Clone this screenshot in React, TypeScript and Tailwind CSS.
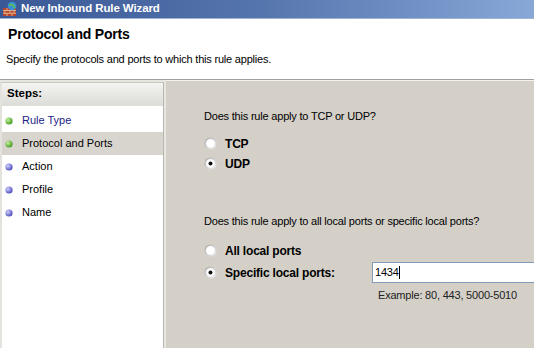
import React from "react";

// classic sunken radio button
function Radio({ checked }: { checked?: boolean }) {
  return (
    <svg width="13" height="13" viewBox="0 0 13 13" className="shrink-0">
      <defs>
        <linearGradient id="rb" x1="0" y1="0" x2="1" y2="1">
          <stop offset="0" stopColor="#9a9a9a" />
          <stop offset="1" stopColor="#ffffff" />
        </linearGradient>
      </defs>
      <circle cx="6.5" cy="6.5" r="6" fill="url(#rb)" />
      <circle cx="6.5" cy="6.5" r="4.8" fill="#fff" stroke="#c8c8c8" strokeWidth="0.6" />
      {checked && <circle cx="6.5" cy="6.5" r="2" fill="#111" />}
    </svg>
  );
}

function Bullet({ done }: { done?: boolean }) {
  return (
    <svg width="8" height="8" viewBox="0 0 8 8" className="shrink-0">
      <defs>
        <radialGradient id={done ? "bg1" : "bg2"} cx="0.35" cy="0.35" r="0.7">
          <stop offset="0" stopColor={done ? "#c8f0a0" : "#d0d0ff"} />
          <stop offset="1" stopColor={done ? "#3c9a1c" : "#4a48b8"} />
        </radialGradient>
      </defs>
      <circle cx="4" cy="4" r="3.6" fill={`url(#${done ? "bg1" : "bg2"})`} />
    </svg>
  );
}

function WallIcon() {
  return (
    <svg width="16" height="16" viewBox="0 0 16 16">
      <rect x="1" y="7" width="13" height="8" fill="#b8442a" />
      <path d="M1 9.5h13M1 12.3h13M5 7v2.5M10 7v2.5M3 9.5v2.8M8 9.5v2.8M12 9.5v2.8M5 12.3V15M10 12.3V15" stroke="#e8c8a0" strokeWidth="0.8" />
      <circle cx="10" cy="5" r="4.3" fill="#3a90d8" />
      <path d="M7 3.5c1.5 1 2.5-.5 4 .5s.5 2.5 2 3" stroke="#5cc04a" strokeWidth="1.6" fill="none" />
    </svg>
  );
}

const steps = [
  { label: "Rule Type", done: true, link: true },
  { label: "Protocol and Ports", done: true, active: true },
  { label: "Action" },
  { label: "Profile" },
  { label: "Name" },
];

export default function App() {
  return (
    <div className="w-[534px] h-[348px] overflow-hidden flex flex-col bg-white text-[11px] text-black font-['Liberation_Sans',Arial,sans-serif]">
      {/* title bar */}
      <div className="h-[19px] shrink-0 flex items-center gap-[3px] pl-[2px] bg-gradient-to-r from-[#3a5896] via-[#5676ae] to-[#88a8d8] border-b border-[#a0b4d4]">
        <WallIcon />
        <span className="text-white font-bold text-[11.5px] tracking-[-0.1px]">New Inbound Rule Wizard</span>
      </div>

      {/* header */}
      <div className="h-[61px] shrink-0 bg-white border-b border-[#a0a0a0] pl-[8px] pt-[6px]">
        <div className="font-bold text-[14px] leading-[18px] tracking-[-0.2px]">Protocol and Ports</div>
        <div className="mt-[9px] -ml-[2px] text-[11px] leading-[14px] tracking-[-0.2px]">Specify the protocols and ports to which this rule applies.</div>
      </div>

      {/* body */}
      <div className="flex-1 flex bg-[#e8e6e0] pt-[2px]">
        <div className="w-[164px] shrink-0 bg-white border-l-[2px] border-l-[#e4e2dc] border-r border-r-[#b8b6b0] border-t border-t-[#c8c6c0] flex flex-col">
          <div className="h-[23px] flex items-center pl-[5px] font-bold text-[11.5px] bg-gradient-to-b from-[#f4f4f2] to-[#dcdcd8] border-b border-[#e0ded8]">
            Steps:
          </div>
          <div className="pt-[3px]">
            {steps.map((s) => (
              <div
                key={s.label}
                className={`h-[23px] flex items-center gap-[9px] pl-[3px] ${s.active ? "bg-[#d8d5cf]" : ""}`}
              >
                <Bullet done={s.done} />
                <span className={`text-[11px] ${s.link ? "text-[#1c1c84]" : ""}`}>{s.label}</span>
              </div>
            ))}
          </div>
        </div>

        <div className="flex-1 ml-[2px] -mt-[2px] bg-[#d4d0c8] border-t border-t-[#f4f2ee] pl-[38px] pt-[28px] tracking-[-0.2px]">
          <div className="leading-[14px]">Does this rule apply to TCP or UDP?</div>
          <div className="mt-[14px] flex flex-col gap-[7px]">
            <div className="flex items-center gap-[8px] h-[13px]">
              <Radio />
              <span className="font-bold text-[12px]">TCP</span>
            </div>
            <div className="flex items-center gap-[8px] h-[13px]">
              <Radio checked />
              <span className="font-bold text-[12px]">UDP</span>
            </div>
          </div>

          <div className="mt-[44px] leading-[14px]">Does this rule apply to all local ports or specific local ports?</div>
          <div className="mt-[16px] flex items-center gap-[8px] h-[13px]">
            <Radio />
            <span className="font-bold text-[12px]">All local ports</span>
          </div>
          <div className="mt-[9px] flex items-center h-[13px]">
            <Radio checked />
            <span className="ml-[8px] w-[147px] font-bold text-[12px]">Specific local ports:</span>
            <div className="flex-1 h-[21px] bg-white border border-[#7f9db9] border-r-0 flex items-center pl-[2px]">
              <span>1434</span>
              <span className="w-px h-[13px] bg-black" />
            </div>
          </div>
          <div className="mt-[8px] ml-[174px] text-[#222]">Example: 80, 443, 5000-5010</div>
        </div>
      </div>
    </div>
  );
}
